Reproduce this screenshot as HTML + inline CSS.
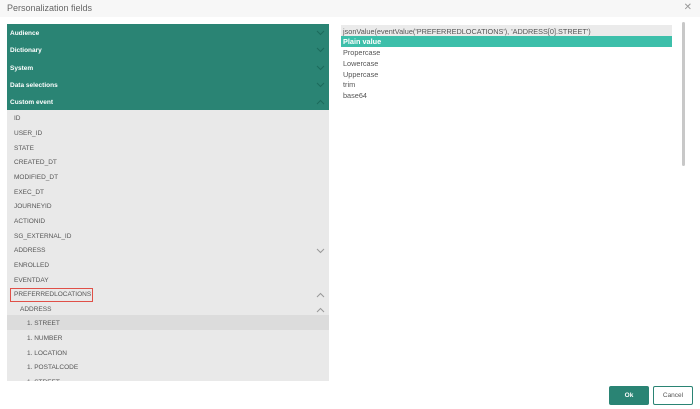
<!DOCTYPE html><html><head><style>
*{margin:0;padding:0;box-sizing:border-box}
body{width:700px;height:409px;background:#fff;font-family:"Liberation Sans",sans-serif;position:relative;overflow:hidden}
.hdr{position:absolute;left:0;top:0;width:700px;height:17px;background:#f7f7f7;font-size:9px;color:#666;padding:3px 0 0 7px}
.x{position:absolute;right:8px;top:2px;font-size:10px;color:#999}
.left{position:absolute;left:7px;top:24px;width:322px;height:357px;background:#e9e9e9;overflow:hidden}
.g{height:17.3px;background:#2a8474;color:#fff;font-size:6.5px;font-weight:bold;padding:6px 0 0 3px;position:relative}
.i{height:14.65px;font-size:6.5px;color:#555;padding:5px 0 0 7px;position:relative}
.ch{position:absolute;right:4px;top:6px;width:9px;height:6px}
.sel{background:#dcdcdc}
.box{position:absolute;left:10px;top:288px;width:83px;height:14px;border:1.3px solid #e05048}
.r{position:absolute;left:341px;top:25px;width:331px;font-size:7.3px;color:#555}
.r div{height:10.8px;padding:1.5px 0 0 2px}
.sb{position:absolute;left:682px;top:22px;width:3px;height:144px;background:#c8c8c8;border-radius:2px}
.ok{position:absolute;left:609px;top:386px;width:40px;height:19px;background:#2a8474;color:#fff;font-size:6.5px;font-weight:bold;text-align:center;line-height:19px;border-radius:2px}
.cn{position:absolute;left:653px;top:386px;width:40px;height:19px;border:1px solid #2a8474;color:#555;font-size:6.5px;text-align:center;line-height:17px;border-radius:2px}
</style></head><body>
<div class="hdr">Personalization fields<span class="x">✕</span></div>
<div class="left">
<div class="g">Audience<svg class="ch" viewBox="0 0 9 6"><path d="M1 1l3.5 3.5L8 1" stroke="#1c6a5c" fill="none"/></svg></div>
<div class="g">Dictionary<svg class="ch" viewBox="0 0 9 6"><path d="M1 1l3.5 3.5L8 1" stroke="#1c6a5c" fill="none"/></svg></div>
<div class="g">System<svg class="ch" viewBox="0 0 9 6"><path d="M1 1l3.5 3.5L8 1" stroke="#1c6a5c" fill="none"/></svg></div>
<div class="g">Data selections<svg class="ch" viewBox="0 0 9 6"><path d="M1 1l3.5 3.5L8 1" stroke="#1c6a5c" fill="none"/></svg></div>
<div class="g">Custom event<svg class="ch" viewBox="0 0 9 6"><path d="M1 5l3.5-3.5L8 5" stroke="#1c6a5c" fill="none"/></svg></div>
<div class="i">ID</div><div class="i">USER_ID</div><div class="i">STATE</div><div class="i">CREATED_DT</div><div class="i">MODIFIED_DT</div><div class="i">EXEC_DT</div><div class="i">JOURNEYID</div><div class="i">ACTIONID</div><div class="i">SG_EXTERNAL_ID</div>
<div class="i">ADDRESS<svg class="ch" viewBox="0 0 9 6"><path d="M1 1l3.5 3.5L8 1" stroke="#999" fill="none"/></svg></div>
<div class="i">ENROLLED</div><div class="i">EVENTDAY</div>
<div class="i">PREFERREDLOCATIONS<svg class="ch" viewBox="0 0 9 6"><path d="M1 5l3.5-3.5L8 5" stroke="#999" fill="none"/></svg></div>
<div class="i" style="padding-left:13px">ADDRESS<svg class="ch" viewBox="0 0 9 6"><path d="M1 5l3.5-3.5L8 5" stroke="#999" fill="none"/></svg></div>
<div class="i sel" style="padding-left:20px">1. STREET</div>
<div class="i" style="padding-left:20px">1. NUMBER</div>
<div class="i" style="padding-left:20px">1. LOCATION</div>
<div class="i" style="padding-left:20px">1. POSTALCODE</div>
<div class="i" style="padding-left:20px">1. STREET</div>
</div>
<div class="box"></div>
<div class="r">
<div style="background:#ebebeb">jsonValue(eventValue('PREFERREDLOCATIONS'), 'ADDRESS[0].STREET')</div>
<div style="background:#3dbfaa;color:#fff;font-weight:bold">Plain value</div>
<div>Propercase</div><div>Lowercase</div><div>Uppercase</div><div>trim</div><div>base64</div>
</div>
<div class="sb"></div>
<div class="ok">Ok</div><div class="cn">Cancel</div>
</body></html>
